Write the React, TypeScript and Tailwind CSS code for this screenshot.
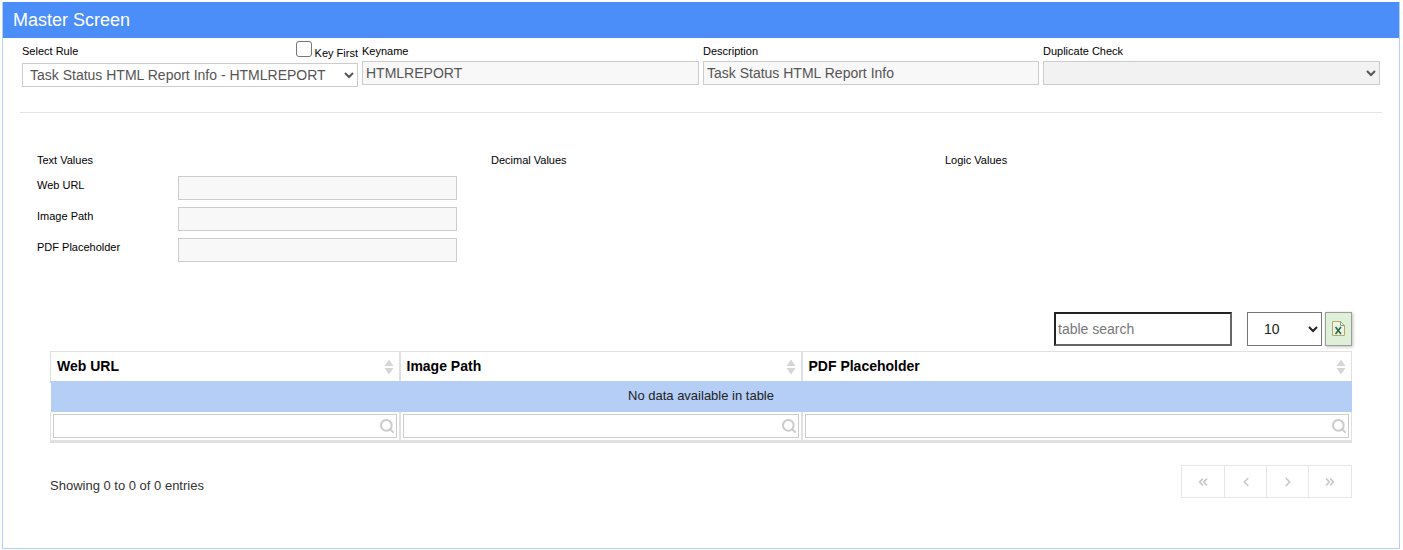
import { ChevronsLeft, ChevronLeft, ChevronRight, ChevronsRight, Search } from "lucide-react";

const textFields = ["Web URL", "Image Path", "PDF Placeholder"];

const columns = [
  { name: "Web URL", width: "w-[349px]" },
  { name: "Image Path", width: "w-[402px]" },
  { name: "PDF Placeholder", width: "w-[550px]" },
];

const SortIcon = () => (
  <svg width="10" height="16" viewBox="0 0 10 16" className="absolute right-[5px] top-[7px]">
    <path d="M5 0.5 L9.5 7 L0.5 7 Z" fill="#d6d6d6" />
    <path d="M5 15.5 L9.5 9 L0.5 9 Z" fill="#d6d6d6" />
  </svg>
);

const ExcelIcon = () => (
  <svg width="13" height="15" viewBox="0 0 13 15">
    <path d="M0.5 0.5 H8.5 L12.5 4.5 V14.5 H0.5 Z" fill="#eef3e2" stroke="#b5a86a" />
    <path d="M8.5 0.5 V4.5 H12.5" fill="none" stroke="#7f9a8a" />
    <path d="M3.5 6 L9 13 M9 6 L3.5 13" stroke="#1f6b4a" strokeWidth="1.6" />
  </svg>
);

const App = () => {
  return (
    <div className="w-[1403px] h-[550px] bg-white pt-[2px] pl-[2px] font-['Liberation_Sans',Arial,sans-serif] overflow-hidden">
      <div className="w-[1398px] h-[547px] border border-[#b4cff8] border-t-0">
        <div className="h-[36px] bg-[#4b8efa] text-white text-[18px] leading-[36px] pl-[10px]">
          Master Screen
        </div>

        <div className="grid grid-cols-[336px_337px_336px_337px] gap-x-[4px] ml-[19px] mt-[3px]">
          <div>
            <div className="flex justify-between h-[22px]">
              <span className="text-[11px] text-black mt-[4px] leading-[12px]">Select Rule</span>
              <label className="flex items-start text-[11px] text-black">
                <input type="checkbox" className="w-[16px] h-[16px] appearance-none border border-[#767676] rounded-[3px] bg-white" />
                <span className="ml-[3px] mt-[6px] leading-[12px]">Key First</span>
              </label>
            </div>
            <select className="w-full h-[24px] border border-[#ccc] bg-white text-[14px] text-[#555] pl-[3px]">
              <option>Task Status HTML Report Info - HTMLREPORT</option>
            </select>
          </div>
          <div>
            <div className="text-[11px] text-black h-[20px] pt-[4px] leading-[12px]">Keyname</div>
            <input disabled value="HTMLREPORT" className="w-full h-[24px] border border-[#ccc] bg-[#f8f8f8] text-[14px] text-[#555] px-[3px]" />
          </div>
          <div>
            <div className="text-[11px] text-black h-[20px] pt-[4px] leading-[12px]">Description</div>
            <input disabled value="Task Status HTML Report Info" className="w-full h-[24px] border border-[#ccc] bg-[#f8f8f8] text-[14px] text-[#555] px-[3px]" />
          </div>
          <div>
            <div className="text-[11px] text-black h-[20px] pt-[4px] leading-[12px]">Duplicate Check</div>
            <select disabled className="w-full h-[24px] border border-[#ccc] bg-[#f2f2f2] text-[#555] opacity-100" />
          </div>
        </div>

        <div className="h-px bg-[#e3e3e3] ml-[17px] w-[1362px] mt-[25px]" />

        <div className="grid grid-cols-[454px_454px_1fr] ml-[34px] mt-[41px] text-[11px] text-black leading-[12px]">
          <div>
            <div className="h-[22px]">Text Values</div>
            {textFields.map((field) => (
              <div key={field} className="flex items-start h-[31px]">
                <span className="w-[141px] pt-[3px]">{field}</span>
                <input disabled className="w-[279px] h-[24px] border border-[#ccc] bg-[#f8f8f8]" />
              </div>
            ))}
          </div>
          <div>Decimal Values</div>
          <div>Logic Values</div>
        </div>

        <div className="flex justify-end items-start w-[1349px] mt-[43px]">
          <input
            placeholder="table search"
            className="w-[178px] h-[34px] border-2 border-t-[#222] border-l-[#222] border-r-[#666] border-b-[#666] text-[14px] px-[2px] placeholder:text-[#777]"
          />
          <select className="w-[75px] h-[34px] ml-[15px] border border-[#767676] rounded-none bg-white text-[14px] text-[#222] pl-[12px]">
            <option>10</option>
          </select>
          <button className="w-[27px] h-[34px] ml-[3px] border border-[#9c9c9c] bg-[#dff0d8] flex items-center justify-center pb-[2px] shadow-[1px_1px_3px_rgba(0,0,0,0.25)]">
            <ExcelIcon />
          </button>
        </div>

        <table className="ml-[47px] mt-[5px] w-[1301px] table-fixed border-collapse">
          <thead>
            <tr className="h-[30px]">
              {columns.map((col) => (
                <th key={col.name} className={`${col.width} relative border-t border-x-2 first:border-l last:border-r border-[#e0e0e0] border-b-2 border-b-[#b4cef6] text-left text-[14px] font-bold text-black pl-[6px] p-0`}>
                  {col.name}
                  <SortIcon />
                </th>
              ))}
            </tr>
          </thead>
          <tbody>
            <tr className="h-[30px] bg-[#b4cef6]">
              <td colSpan={3} className="border-t border-t-[#d5e0ee] pb-[2px] text-center text-[13px] text-[#222]">
                No data available in table
              </td>
            </tr>
            <tr className="h-[30px]">
              {columns.map((col) => (
                <td key={col.name} className="border-x-2 first:border-l last:border-r border-b-[3px] border-[#e0e0e0] px-[2px]">
                  <div className="relative">
                    <input className="w-full h-[24px] border border-[#ccc] bg-white" />
                    <Search size={16} strokeWidth={3} className="absolute right-[2px] top-[4px] text-[#ccc]" />
                  </div>
                </td>
              ))}
            </tr>
          </tbody>
        </table>

        <div className="flex justify-between items-start w-[1349px] ml-[47px] pr-[47px] mt-[22px]">
          <span className="text-[13px] text-[#333] mt-[14px] leading-[14px]">Showing 0 to 0 of 0 entries</span>
          <div className="flex border border-[#e6e6e6] h-[33px] text-[#c8c8c8]">
            <span className="w-[43px] flex items-center justify-center border-r border-[#e6e6e6]"><ChevronsLeft size={14} strokeWidth={3} /></span>
            <span className="w-[42px] flex items-center justify-center border-r border-[#e6e6e6]"><ChevronLeft size={14} strokeWidth={3} /></span>
            <span className="w-[42px] flex items-center justify-center border-r border-[#e6e6e6]"><ChevronRight size={14} strokeWidth={3} /></span>
            <span className="w-[42px] flex items-center justify-center"><ChevronsRight size={14} strokeWidth={3} /></span>
          </div>
        </div>
      </div>
    </div>
  );
};

export default App;
